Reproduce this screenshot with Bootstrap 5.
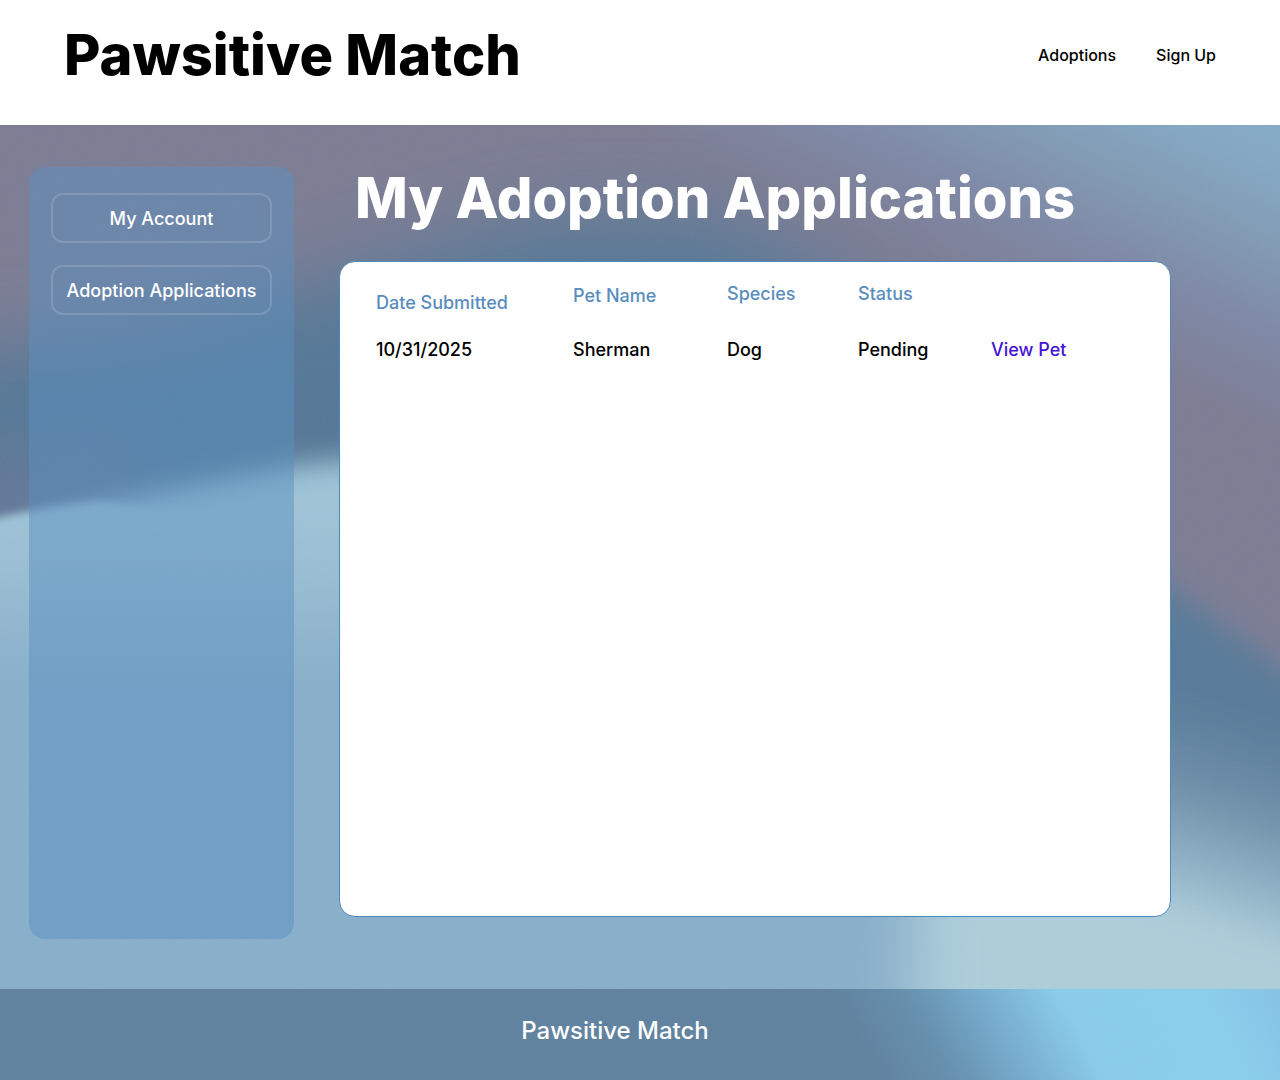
<!DOCTYPE html>
<html lang="en">
<head>
<meta charset="utf-8">
<meta name="viewport" content="width=device-width, initial-scale=1">
<title>Pawsitive Match</title>
<link href="https://cdn.jsdelivr.net/npm/bootstrap@5.3.0/dist/css/bootstrap.min.css" rel="stylesheet">
<style>
body { font-family: Inter, "Liberation Sans", sans-serif; font-weight: 500; color: #000; }
a { text-decoration: none; }
.site-header { min-height: 125px; padding: 20px 64px 0; }
.display-title { font-size: 56px; line-height: 70px; font-weight: 800; margin: 0; }
.site-links { gap: 40px; height: 70px; }
.site-links a { font-size: 16px; line-height: 24px; color: #000; }
.page-main { padding: 42px 109px 50px 29px; gap: 45px; isolation: isolate; }
.backdrop { position: absolute; inset: 0; width: 100%; height: 100%; z-index: -1; }
.side-panel { flex: 0 0 265px; padding: 26px 22px; gap: 22px; border-radius: 16px; background: rgba(92, 143, 191, .5); }
.side-panel .btn { height: 50px; padding: 0; font-size: 18px; font-weight: 500; color: #fff; border: 2px solid rgba(255, 255, 255, .15); border-radius: 12px; }
.side-panel .btn:hover { background: rgba(255, 255, 255, .1); }
.apps-heading { padding: 0 16px; color: #fff; margin: -4px 0 28px; }
.apps-panel { min-height: 656px; padding: 20px 36px; border: 1px solid #5088bd; border-radius: 16px; background: #fff; }
.apps-table { font-size: 18px; line-height: 24px; table-layout: fixed; width: 100%; }
.apps-table th { font-weight: 500; color: #5a8dbe; padding: 0; height: 56px; vertical-align: top; }
.apps-table td { padding: 0; }
.apps-table .drop-sm { padding-top: 2px; }
.apps-table .drop-md { padding-top: 9px; }
.apps-table a { color: #4614d8; }
.w-date { width: 197px; } .w-name { width: 154px; } .w-species { width: 131px; } .w-status { width: 133px; }
.site-footer { min-height: 91px; padding: 25px 50px 0 0; color: #fff; font-size: 24px; line-height: 34px; isolation: isolate; }
</style>
</head>
<body class="d-flex flex-column min-vh-100">
<header class="site-header bg-white d-flex justify-content-between align-items-start">
  <h1 class="display-title">Pawsitive Match</h1>
  <nav class="site-links d-flex align-items-center" aria-label="Main">
    <a href="#">Adoptions</a>
    <a href="#">Sign Up</a>
  </nav>
</header>

<main class="page-main position-relative flex-grow-1 d-flex">
  <svg class="backdrop" viewBox="0 0 1280 864" preserveAspectRatio="none" aria-hidden="true">
    <defs>
      <filter id="b3" x="-10%" y="-10%" width="120%" height="120%"><feGaussianBlur stdDeviation="4"/></filter>
      <filter id="b12" x="-30%" y="-30%" width="160%" height="160%"><feGaussianBlur stdDeviation="14"/></filter>
      <filter id="b30" x="-50%" y="-50%" width="200%" height="200%"><feGaussianBlur stdDeviation="30"/></filter>
      <filter id="b50" x="-50%" y="-50%" width="200%" height="200%"><feGaussianBlur stdDeviation="38"/></filter>
      <filter id="grain" x="0" y="0" width="100%" height="100%"><feTurbulence type="fractalNoise" baseFrequency="0.6" numOctaves="2"/><feColorMatrix type="saturate" values="0"/></filter>
      <linearGradient id="corner" gradientUnits="userSpaceOnUse" x1="1280" y1="-30" x2="1150" y2="245">
        <stop offset="0" stop-color="#85aecc"/><stop offset=".22" stop-color="#84a8c4"/><stop offset=".45" stop-color="#819bb5"/><stop offset=".72" stop-color="#7e88a5"/><stop offset="1" stop-color="#7c7d94"/>
      </linearGradient>
      <linearGradient id="waterL" gradientUnits="userSpaceOnUse" x1="0" y1="370" x2="0" y2="560">
        <stop offset="0" stop-color="#9fc4d7"/><stop offset=".3" stop-color="#9cc0d4"/><stop offset="1" stop-color="#88afcb"/>
      </linearGradient>
      <linearGradient id="waterR" gradientUnits="userSpaceOnUse" x1="1150" y1="560" x2="1085" y2="765">
        <stop offset="0" stop-color="#587a9a"/><stop offset=".4" stop-color="#6e8fa9"/><stop offset=".75" stop-color="#90b2c6"/><stop offset="1" stop-color="#adceda"/>
      </linearGradient>
    </defs>
    <rect width="1280" height="864" fill="url(#corner)"/>
    <path d="M-150 235 L150 210 L380 140 L540 95 L720 95 L850 160 L960 300 L960 620 L-150 620Z" fill="#557897" filter="url(#b50)"/>
    <path d="M-60 340 L130 300 L130 430 L-60 430Z" fill="#68799a" filter="url(#b30)" opacity=".8"/>
    <path d="M800 350 L1160 455 L1290 550 L1420 650 L1420 1000 L800 1000Z" fill="url(#waterR)" filter="url(#b12)"/>
    <path d="M-200 470 L0 424 L80 388 L160 366 L300 340 L500 320 L860 500 L800 1000 L-200 1000Z" fill="url(#waterL)" filter="url(#b12)"/>
    <path d="M870 500 L920 500 L910 1000 L300 1000 L300 500Z" fill="#88afcb" filter="url(#b30)"/>
    <path d="M-60 406 L0 392 L50 382 L100 376 L160 385 L300 400 L440 420 L440 920 L-60 920Z" fill="url(#waterL)" filter="url(#b3)"/>
    <rect width="1280" height="864" filter="url(#grain)" opacity=".05"/>
  </svg>

  <aside class="side-panel d-flex flex-column">
    <button class="btn" type="button">My Account</button>
    <button class="btn" type="button">Adoption Applications</button>
  </aside>

  <section class="flex-grow-1 d-flex flex-column">
    <h2 class="display-title apps-heading">My Adoption Applications</h2>
    <div class="apps-panel">
      <table class="apps-table">
        <colgroup><col class="w-date"><col class="w-name"><col class="w-species"><col class="w-status"><col></colgroup>
        <thead>
          <tr>
            <th class="drop-md" scope="col">Date Submitted</th>
            <th class="drop-sm" scope="col">Pet Name</th>
            <th scope="col">Species</th>
            <th scope="col">Status</th>
            <td></td>
          </tr>
        </thead>
        <tbody>
          <tr><td>10/31/2025</td><td>Sherman</td><td>Dog</td><td>Pending</td><td><a href="#">View Pet</a></td></tr>
        </tbody>
      </table>
    </div>
  </section>
</main>

<footer class="site-footer position-relative text-center">
  <svg class="backdrop" viewBox="0 0 1280 91" preserveAspectRatio="none" aria-hidden="true">
    <defs>
      <linearGradient id="foot" gradientUnits="userSpaceOnUse" x1="860" y1="50" x2="1260" y2="-170">
        <stop offset="0" stop-color="#5f82a0"/><stop offset=".14" stop-color="#6590ae"/><stop offset=".26" stop-color="#74a8ca"/><stop offset=".43" stop-color="#89cdea"/><stop offset=".7" stop-color="#8acfed"/><stop offset="1" stop-color="#80b7e0"/>
      </linearGradient>
    </defs>
    <rect width="1280" height="91" fill="url(#foot)"/>
    <rect width="1280" height="91" filter="url(#grain)" opacity=".05"/>
  </svg>
  Pawsitive Match
</footer>
<script src="https://cdn.jsdelivr.net/npm/bootstrap@5.3.0/dist/js/bootstrap.bundle.min.js"></script>
</body>
</html>
